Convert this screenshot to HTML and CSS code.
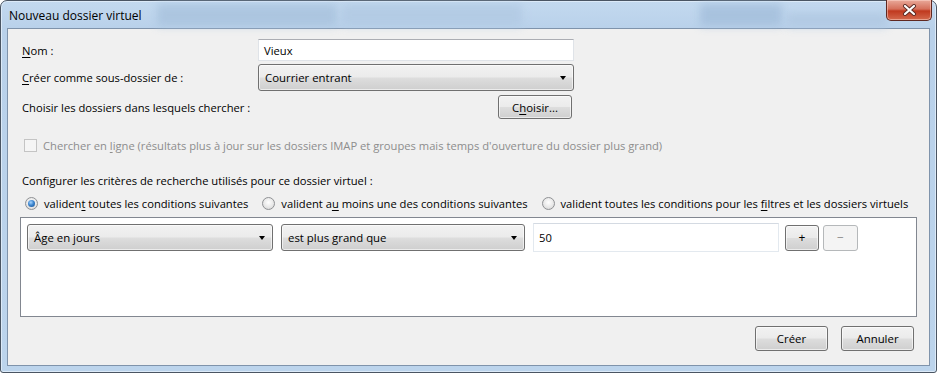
FILE: index.html
```html
<!DOCTYPE html>
<html lang="fr">
<head>
    <meta charset="UTF-8">
    <title>Nouveau dossier virtuel</title>
    <link rel="stylesheet" href="styles.css">
</head>
<body>
<div class="window">
    <div class="titlebar">
        <span class="title">Nouveau dossier virtuel</span>
        <div class="ghost ghost-a"></div>
        <div class="ghost ghost-b"></div>
        <div class="ghost ghost-c"></div>
        <div class="ghost ghost-d"></div>
        <button class="close" type="button">
            <svg width="17" height="12" viewBox="0 0 17 12">
                <path d="M4 2 L13 10 M13 2 L4 10" stroke="#5a2a24" stroke-width="4" stroke-linecap="round"/>
                <path d="M4 2 L13 10 M13 2 L4 10" stroke="#ffffff" stroke-width="2.2" stroke-linecap="round"/>
            </svg>
        </button>
    </div>
    <div class="client">
        <div class="form-row row-name">
            <label class="label"><u>N</u>om :</label>
            <div class="textbox">Vieux</div>
        </div>
        <div class="form-row row-parent">
            <label class="label"><u>C</u>réer comme sous-dossier de :</label>
            <div class="select select-wide"><span>Courrier entrant</span><span class="arrow"></span></div>
        </div>
        <div class="form-row row-choose">
            <label class="label">Choisir les dossiers dans lesquels chercher :</label>
            <button class="btn btn-choose" type="button">C<u>h</u>oisir...</button>
        </div>
        <div class="check-row">
            <span class="checkbox"></span>
            <span class="muted">Chercher en <u>l</u>igne (résultats plus à jour sur les dossiers IMAP et groupes mais temps d'ouverture du dossier plus grand)</span>
        </div>
        <p class="section">Configurer les critères de recherche utilisés pour ce dossier virtuel :</p>
        <div class="radios">
            <span class="radio-item"><span class="radio checked"></span><span>validen<u>t</u> toutes les conditions suivantes</span></span>
            <span class="radio-item"><span class="radio"></span><span>valident a<u>u</u> moins une des conditions suivantes</span></span>
            <span class="radio-item"><span class="radio"></span><span>valident toutes les conditions pour les <u>f</u>iltres et les dossiers virtuels</span></span>
        </div>
        <div class="listbox">
            <div class="cond-row">
                <div class="select select-cond"><span>Âge en jours</span><span class="arrow"></span></div>
                <div class="select select-op"><span>est plus grand que</span><span class="arrow"></span></div>
                <div class="textbox textbox-value">50</div>
                <button class="btn btn-small" type="button">+</button>
                <button class="btn btn-small disabled" type="button">−</button>
            </div>
        </div>
        <div class="actions">
            <button class="btn btn-action" type="button">Créer</button>
            <button class="btn btn-action" type="button">Annuler</button>
        </div>
    </div>
</div>
</body>
</html>
```
FILE: styles.css
```css
body {
    margin: 0;
    font-family: "Open Sans", Arial, sans-serif;
    font-size: 11.2px;
    color: #000;
    background: #ffffff;
}
u {
    text-decoration: underline;
    text-underline-offset: 2px;
}
.window {
    width: 937px;
    height: 373px;
    border: 1px solid #4a5563;
    border-radius: 7px 7px 3px 3px;
    background: linear-gradient(to bottom, #c3d9ef 0, #b9d1ea 28px, #bcd4ec 100%);
    padding: 0 6px 7px 6px;
    box-sizing: border-box;
    box-shadow: inset 0 0 0 1px #dceaf8;
}
.titlebar {
    position: relative;
    height: 27px;
}
.title {
    position: relative;
    z-index: 2;
    display: block;
    padding: 6px 0 0 2px;
    font-size: 12px;
    color: #000;
}
.ghost {
    position: absolute;
    top: 3px;
    height: 22px;
    background: #a8c2dd;
    filter: blur(4px);
    opacity: 0.8;
}
.ghost-a { left: 150px; width: 180px; }
.ghost-b { left: 335px; width: 180px; background: #b1c9e3; }
.ghost-c { left: 693px; width: 82px; background: #a3bedb; }
.ghost-d { left: 780px; width: 100px; top: 12px; height: 14px; background: #b0c8e2; }
.close {
    position: absolute;
    top: -1px;
    right: -2px;
    width: 46px;
    height: 21px;
    padding: 0;
    border: 1px solid #5f2821;
    border-top: none;
    border-radius: 0 0 5px 5px;
    background: linear-gradient(to bottom, #e9a99a 0, #d5705b 45%, #c0391f 55%, #d4694d 100%);
    box-shadow: inset 0 0 0 1px rgba(255, 220, 210, 0.5);
    display: flex;
    align-items: center;
    justify-content: center;
}
.client {
    height: 338px;
    border: 1px solid #7f93ab;
    background: #f0f0f0;
    box-sizing: border-box;
    padding: 0 15px 0 14px;
}
.form-row {
    display: flex;
    align-items: center;
}
.label {
    width: 236px;
    flex: none;
}
.row-name {
    margin-top: 10px;
}
.row-parent {
    margin-top: 3px;
}
.row-choose {
    margin-top: 4px;
}
.textbox {
    width: 316px;
    height: 22px;
    box-sizing: border-box;
    background: #fff;
    border: 1px solid #dfe3e8;
    border-top-color: #abadb3;
    padding: 0 0 0 5px;
    display: flex;
    align-items: center;
}
.select {
    position: relative;
    box-sizing: border-box;
    height: 27px;
    border: 1px solid #707070;
    border-radius: 3px;
    background: linear-gradient(to bottom, #f2f2f2 0, #ebebeb 48%, #dddddd 52%, #cfcfcf 100%);
    box-shadow: inset 0 0 0 1px rgba(255, 255, 255, 0.6);
    padding-left: 6px;
    display: flex;
    align-items: center;
    font-size: 11.4px;
}
.select-wide {
    width: 316px;
}
.arrow {
    position: absolute;
    right: 7px;
    top: 11px;
    width: 0;
    height: 0;
    border-left: 3.5px solid transparent;
    border-right: 3.5px solid transparent;
    border-top: 4px solid #000;
}
.btn {
    font-family: inherit;
    font-size: 11.4px;
    color: #000;
    box-sizing: border-box;
    border: 1px solid #707070;
    border-radius: 3px;
    background: linear-gradient(to bottom, #f2f2f2 0, #ebebeb 48%, #dddddd 52%, #cfcfcf 100%);
    box-shadow: inset 0 0 0 1px rgba(255, 255, 255, 0.6);
    padding: 0;
}
.btn-choose {
    width: 74px;
    height: 24px;
    margin-left: 240px;
}
.check-row {
    display: flex;
    align-items: center;
    margin-top: 18px;
    height: 16px;
    padding-left: 2px;
}
.checkbox {
    width: 13px;
    height: 13px;
    box-sizing: border-box;
    border: 1px solid #c4c4c4;
    background: #f5f5f5;
    margin-right: 6px;
}
.muted {
    color: #8d8d8d;
}
.section {
    margin: 20px 0 0 0;
    height: 16px;
    line-height: 16px;
}
.radios {
    display: flex;
    margin-top: 6px;
    height: 16px;
    align-items: center;
    padding-left: 3px;
    white-space: nowrap;
}
.radio-item {
    display: flex;
    flex: none;
    align-items: center;
    margin-right: 14px;
}
.radio-item:last-child {
    margin-right: 0;
}
.radio {
    width: 13px;
    height: 13px;
    box-sizing: border-box;
    border-radius: 50%;
    border: 1px solid #8f9194;
    background: radial-gradient(circle at 50% 40%, #ffffff 0, #e8e8e8 55%, #d0d0d0 100%);
    margin-right: 6px;
    position: relative;
}
.radio.checked::after {
    content: "";
    position: absolute;
    left: 2px;
    top: 2px;
    width: 7px;
    height: 7px;
    border-radius: 50%;
    background: radial-gradient(circle at 40% 35%, #a6d4ff 0, #3d86cf 45%, #154a8a 100%);
}
.listbox {
    margin: 6px 0 0 -2px;
    width: 897px;
    height: 100px;
    box-sizing: border-box;
    border: 1px solid #828790;
    background: #fff;
    padding: 5px 6px;
}
.cond-row {
    display: flex;
    align-items: center;
}
.select-cond {
    width: 246px;
}
.select-op {
    width: 244px;
    margin-left: 8px;
}
.textbox-value {
    width: 246px;
    height: 29px;
    margin-left: 8px;
    border-color: #e3e9ef;
    border-top-color: #d4dae2;
}
.btn-small {
    width: 34px;
    height: 26px;
    margin-left: 6px;
    font-size: 12px;
}
.btn-small.disabled {
    width: 35px;
    margin-left: 4px;
    border-color: #b5b8ba;
    background: #f4f4f4;
    color: #8a8a8a;
    box-shadow: none;
}
.actions {
    display: flex;
    justify-content: flex-end;
    gap: 13px;
    margin-top: 9px;
}
.btn-action {
    width: 73px;
    height: 25px;
}
```
